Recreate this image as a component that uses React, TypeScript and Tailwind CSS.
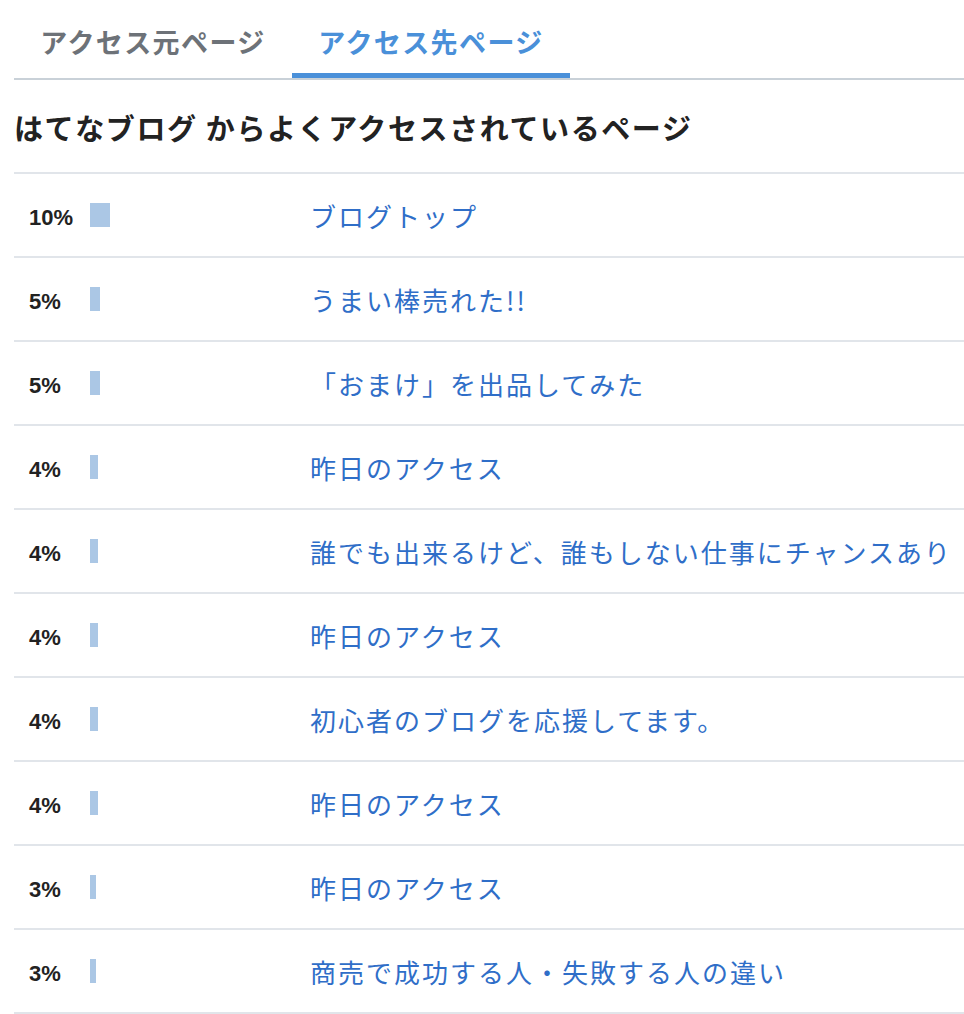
const rows = [
  { pct: 10, title: 'ブログトップ' },
  { pct: 5, title: 'うまい棒売れた!!' },
  { pct: 5, title: '「おまけ」を出品してみた' },
  { pct: 4, title: '昨日のアクセス' },
  { pct: 4, title: '誰でも出来るけど、誰もしない仕事にチャンスあり' },
  { pct: 4, title: '昨日のアクセス' },
  { pct: 4, title: '初心者のブログを応援してます。' },
  { pct: 4, title: '昨日のアクセス' },
  { pct: 3, title: '昨日のアクセス' },
  { pct: 3, title: '商売で成功する人・失敗する人の違い' },
]

const jp = "font-['Noto_Sans_CJK_JP',sans-serif]"

export default function App() {
  return (
    <div className={`w-[964px] bg-white pl-[14px] ${jp}`}>
      <div className="flex border-b-2 border-[#c9d1d8]">
        <div className="w-[278px] h-[78px] pt-[12px] flex items-center justify-center text-[27px] tracking-[1.4px] font-bold text-[#6d7278] border-b-[5px] border-transparent">
          アクセス元ページ
        </div>
        <div className="w-[278px] h-[78px] pt-[12px] flex items-center justify-center text-[27px] tracking-[1.4px] font-bold text-[#4a90d9] border-b-[5px] border-[#4a90d9]">
          アクセス先ページ
        </div>
      </div>

      <h2 className="h-[92px] pt-[4px] flex items-center text-[29px] tracking-[1.6px] font-bold text-[#222]">
        はてなブログ からよくアクセスされているページ
      </h2>

      <ul className="border-t-2 border-[#e1e5ea]">
        {rows.map((r, i) => (
          <li key={i} className="h-[84px] flex items-center border-b-2 border-[#e1e5ea]">
            <span className="w-[76px] pl-[15px] pt-[5px] font-['Liberation_Sans',sans-serif] font-bold text-[22px] text-[#222]">
              {r.pct}%
            </span>
            <span className="w-[220px] flex">
              <span className="h-[24px] bg-[#abc7e5]" style={{ width: r.pct * 2 }} />
            </span>
            <a href="#" className="text-[26px] tracking-[2px] text-[#2f6ec8] whitespace-nowrap">
              {r.title}
            </a>
          </li>
        ))}
      </ul>
    </div>
  )
}
